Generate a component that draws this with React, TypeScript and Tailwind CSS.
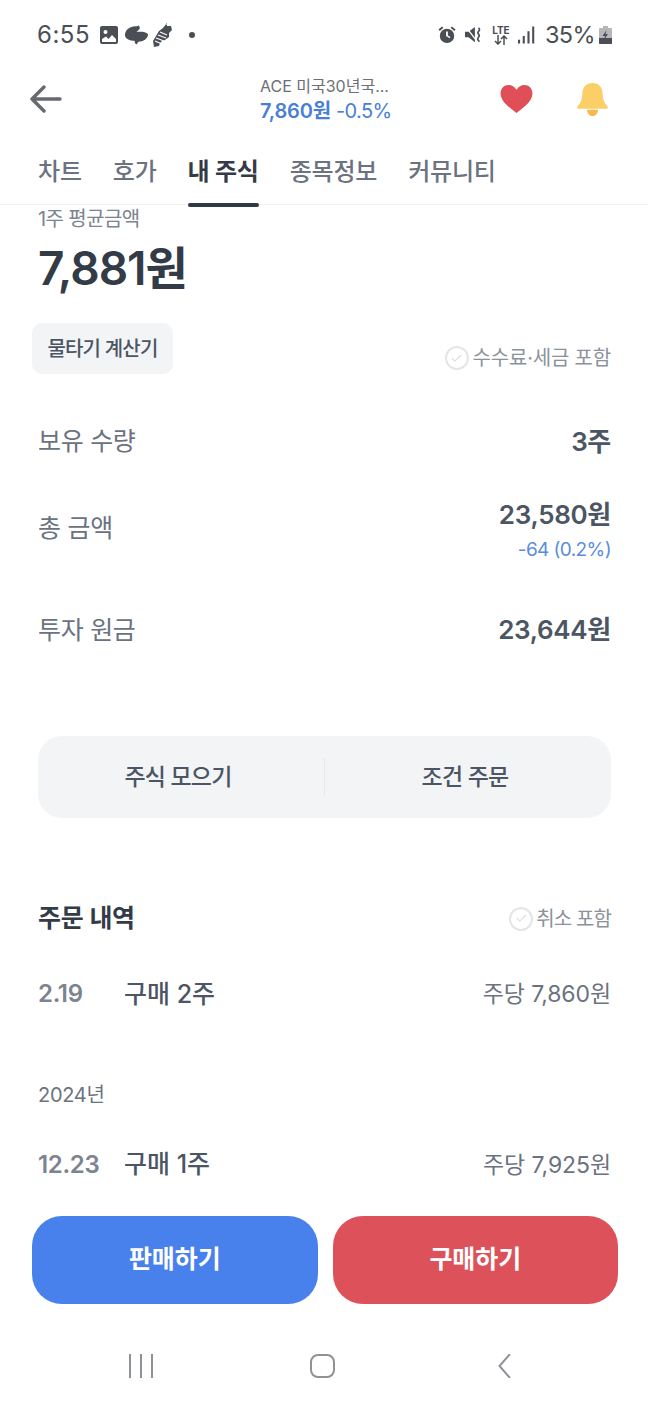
import { Check } from "lucide-react";

const tabs = ["차트", "호가", "내 주식", "종목정보", "커뮤니티"];

function StatusBar() {
  return (
    <div className="flex h-[68px] items-center justify-between pl-[37px] pr-[35px] pt-[1px] text-[#4b4f55]">
      <div className="flex items-center">
        <span className="text-[24px] leading-none tracking-[0.5px]">6:55</span>
        <svg viewBox="0 0 20 20" className="ml-[9px] h-[20px] w-[20px]" fill="#4b4f55">
          <path fillRule="evenodd" d="M3 1h14a2 2 0 0 1 2 2v14a2 2 0 0 1-2 2H3a2 2 0 0 1-2-2V3a2 2 0 0 1 2-2Zm0 13v3h14v-3l-4-4-3.500 4-2.500-2.500L3 14Zm3.500-9a2 2 0 1 0 0 4 2 2 0 0 0 0-4Z" />
        </svg>
        <svg viewBox="0 0 26 22" className="ml-[5px] h-[22px] w-[25px]" fill="#4b4f55">
          <path d="M1 11C1 6 6 2 12 2c1 0 2 0 3-1 1 .500 2 2 1 4l-3 3c3-.500 9-1 12 2 0 5-5 8-10 8l-2 3c-1-.500-2-2-2-4C6 17 1 15 1 11Z" />
        </svg>
        <svg viewBox="0 0 20 24" className="ml-[4px] h-[24px] w-[20px]" fill="#4b4f55">
          <path d="M13 0l1 3 4 0 1 4-3 3 0 4-4 3-3 1-2 2-1 3-5 1-1-6 3-5 3-5 4-3 4-5Z" />
          <path d="M2 18l7 3M3 15l8 3M5 12l8 3M7 9l7 3" stroke="#fff" strokeWidth="1.100" />
        </svg>
        <span className="ml-[16px] h-[6px] w-[6px] rounded-full bg-[#4b4f55]" />
      </div>
      <div className="flex items-center">
        <svg viewBox="0 0 20 20" className="h-[18px] w-[18px]" fill="#4b4f55">
          <path fillRule="evenodd" d="M10 3a8 8 0 1 1 0 16 8 8 0 0 1 0-16Zm-1 3v5l4 2.500.800-1.300L11 10.500V6H9Z" />
          <path d="M4.500 0.500 0.500 4l1.500 1.500L6 2 4.500 0.500ZM15.500 0.500 14 2l4 3.500L19.500 4l-4-3.500Z" />
        </svg>
        <svg viewBox="0 0 20 20" className="ml-[9px] h-[18px] w-[18px]" fill="#4b4f55">
          <path d="M0 6.500h4L11 1v17l-7-5.500H0v-6Z" />
          <path d="M1 1l13 17" stroke="#fff" strokeWidth="1.500" />
          <path d="M15 2c2 1.500 1 3 0 4s-1 2 0 3 1 2.500 0 3.500-1 3 1 5" fill="none" stroke="#4b4f55" strokeWidth="1.800" />
        </svg>
        <div className="ml-[9px] flex w-[18px] flex-col items-center">
          <span className="text-[10px] font-bold leading-[10px]">LTE</span>
          <svg viewBox="0 0 18 10" className="h-[10px] w-[18px]" fill="none" stroke="#4b4f55" strokeWidth="1.500">
            <path d="M6 0v9M3 6l3 3 3-3M12 10V1M9 4l3-3 3 3" />
          </svg>
        </div>
        <svg viewBox="0 0 18 18" className="ml-[8px] h-[18px] w-[17px]" fill="#4b4f55">
          <rect x="0" y="14" width="2.200" height="4" />
          <rect x="5" y="10" width="2.200" height="8" />
          <rect x="10" y="5" width="2.200" height="13" />
          <rect x="15" y="0" width="2.200" height="18" />
        </svg>
        <span className="ml-[10px] text-[23.500px] leading-none tracking-[-0.6px]">35%</span>
        <svg viewBox="0 0 13 18" className="ml-[3px] h-[18px] w-[15px]">
          <path d="M4 0h5v2h3a1 1 0 0 1 1 1v14a1 1 0 0 1-1 1H1a1 1 0 0 1-1-1V3a1 1 0 0 1 1-1h3V0Z" fill="#b5b7ba" />
          <path d="M0 12h13v5a1 1 0 0 1-1 1H1a1 1 0 0 1-1-1v-5Z" fill="#4b4f55" />
          <path d="M7.500 4 3.500 10h2.500l-1 4 4-6H6.500l1-4Z" fill="#4b4f55" />
        </svg>
      </div>
    </div>
  );
}

function Header() {
  return (
    <div className="flex h-[62px] items-center pl-[30px] pr-[38px]">
      <svg viewBox="0 0 32 28" className="h-[28px] w-[32px]" fill="none" stroke="#666a70" strokeWidth="3.400" strokeLinecap="round" strokeLinejoin="round">
        <path d="M30 14H2M14 2 2 14l12 12" />
      </svg>
      <div className="ml-[198px] flex w-[130px] flex-col whitespace-nowrap">
        <span className="text-[16px] leading-[24px] text-[#6b7078]">ACE 미국30년국...</span>
        <span className="text-[20px] leading-[27px] tracking-[-0.6px] text-[#4a7fd6]">
          <span className="font-semibold tracking-[-0.2px]">7,860원</span> -0.5%
        </span>
      </div>
      <svg viewBox="0 0 36 32" className="ml-[109px] h-[30px] w-[35px]" fill="#e04f58">
        <path d="M18 31C12 26 1 19 1 10 1 4.500 5 1 9.500 1c3.500 0 6.500 2 8.500 5 2-3 5-5 8.500-5C31 1 35 4.500 35 10c0 9-11 16-17 21Z" />
      </svg>
      <svg viewBox="0 0 36 38" className="ml-[41px] h-[35px] w-[35px]" fill="#fbcf66">
        <path d="M18 1c7 0 11 5 11 12 0 6 2 10 5 13 1 1 1 3-1 3H3c-2 0-2-2-1-3 3-3 5-7 5-13C7 6 11 1 18 1Z" />
        <path d="M12 30h12c0 4-3 7-6 7s-6-3-6-7Z" fill="#f7b84e" />
      </svg>
    </div>
  );
}

function Tabs() {
  return (
    <div className="mt-[5px] flex h-[70px] gap-[31px] border-b border-[#eff0f2] pl-[38px]">
      {tabs.map((tab, i) => (
        <div
          key={tab}
          className={
            i === 2
              ? "relative flex h-[70px] items-center pt-[4px] text-[24px] font-bold tracking-[-0.2px] text-[#333b47]"
              : "flex h-[70px] items-center pt-[4px] text-[24px] font-medium tracking-[-0.2px] text-[#6b7280]"
          }
        >
          {tab}
          {i === 2 && <span className="absolute inset-x-0 bottom-[-2px] h-[4px] rounded-full bg-[#2f3845]" />}
        </div>
      ))}
    </div>
  );
}

function Row({ label, value, sub, className }: { label: string; value: string; sub?: string; className: string }) {
  return (
    <div className={`flex items-center justify-between ${className}`}>
      <span className="text-[25px] tracking-[-0.3px] text-[#6b7280]">{label}</span>
      <div className="flex flex-col items-end">
        <span className="text-[26px] font-semibold leading-[36px] tracking-[-0.3px] text-[#4b5563]">{value}</span>
        {sub && <span className="mb-[-2px] mt-[4px] text-[19px] leading-[26px] tracking-[-0.6px] text-[#5b8ddb]">{sub}</span>}
      </div>
    </div>
  );
}

function Tick() {
  return (
    <span className="flex h-[24px] w-[24px] items-center justify-center rounded-full border-2 border-[#e3e5e8]">
      <Check className="h-[13px] w-[13px] text-[#dcdfe3]" strokeWidth={2} />
    </span>
  );
}

function Order({ date, qty, price }: { date: string; qty: string; price: string }) {
  return (
    <div className="flex items-center">
      <span className="w-[86px] text-[24px] font-semibold tracking-[-0.3px] text-[#7b8490]">{date}</span>
      <span className="text-[25px] font-medium text-[#4b5563]">{qty}</span>
      <span className="ml-auto text-[23px] tracking-[-0.1px] text-[#6b7280]">{price}</span>
    </div>
  );
}

export default function App() {
  return (
    <div
      className="flex h-[1404px] w-[648px] flex-col overflow-hidden bg-white"
      style={{ fontFamily: 'Inter, "Noto Sans CJK KR", sans-serif' }}
    >
      <StatusBar />
      <Header />
      <Tabs />

      <div className="h-[1011px] overflow-hidden pl-[38px] pr-[37px]">
        <div className="mt-[1px] text-[20px] leading-[26px] tracking-[-0.6px] text-[#7b8490]">1주 평균금액</div>
        <div className="mt-[8px] text-[46px] font-semibold leading-[56px] tracking-[-1px] text-[#333b47]">7,881원</div>

        <div className="mt-[27px] flex items-end justify-between">
          <button className="-ml-[6px] flex h-[51px] w-[141px] items-center justify-center rounded-[10px] bg-[#f2f4f6] text-[20px] font-medium tracking-[-0.8px] text-[#4b5563]">
            물타기 계산기
          </button>
          <div className="flex items-center gap-[4px] pb-[1px]">
            <Tick />
            <span className="text-[20px] tracking-[-0.2px] text-[#8b929c]">수수료·세금 포함</span>
          </div>
        </div>

        <Row label="보유 수량" value="3주" className="mt-[49px]" />
        <Row label="총 금액" value="23,580원" sub="-64 (0.2%)" className="mt-[36px]" />
        <Row label="투자 원금" value="23,644원" className="mt-[51px]" />

        <div className="mt-[87px] flex h-[82px] items-center rounded-[24px] bg-[#f2f4f6]">
          <div className="flex-1 pr-[6px] text-center text-[23px] font-medium tracking-[-0.8px] text-[#4b5563]">주식 모으기</div>
          <div className="h-[38px] w-px bg-[#e5e7eb]" />
          <div className="flex-1 pr-[6px] text-center text-[23px] font-medium tracking-[-0.8px] text-[#4b5563]">조건 주문</div>
        </div>

        <div className="mt-[82px] flex items-center justify-between">
          <span className="text-[25px] font-semibold tracking-[-0.3px] text-[#333b47]">주문 내역</span>
          <div className="flex items-center gap-[3px]">
            <Tick />
            <span className="text-[20px] tracking-[-0.9px] text-[#8b929c]">취소 포함</span>
          </div>
        </div>

        <div className="mt-[38px]">
          <Order date="2.19" qty="구매 2주" price="주당 7,860원" />
        </div>
        <div className="mt-[67px] text-[20px] tracking-[-0.3px] text-[#6b7280]">2024년</div>
        <div className="mt-[36px]">
          <Order date="12.23" qty="구매 1주" price="주당 7,925원" />
        </div>
      </div>

      <div className="flex gap-[15px] pl-[32px] pr-[30px]">
        <button className="flex h-[88px] flex-1 items-center justify-center rounded-[30px] bg-[#4880ec] text-[25px] font-semibold tracking-[-0.1px] text-white">
          판매하기
        </button>
        <button className="flex h-[88px] flex-1 items-center justify-center rounded-[30px] bg-[#dd525a] text-[25px] font-semibold tracking-[-0.1px] text-white">
          구매하기
        </button>
      </div>

      <div className="flex flex-1 items-center pl-[129px] pt-[24px]">
        <svg viewBox="0 0 24 24" className="h-[24px] w-[24px]" fill="none" stroke="#8e9296" strokeWidth="2">
          <path d="M1 0v24M12 0v24M23 0v24" />
        </svg>
        <svg viewBox="0 0 25 24" className="ml-[157px] h-[24px] w-[25px]" fill="none" stroke="#8e9296" strokeWidth="2">
          <rect x="1" y="1" width="23" height="22" rx="7" />
        </svg>
        <svg viewBox="0 0 13 24" className="ml-[163px] h-[24px] w-[13px]" fill="none" stroke="#8e9296" strokeWidth="2">
          <path d="M12 0 1.500 12 12 24" />
        </svg>
      </div>
    </div>
  );
}
